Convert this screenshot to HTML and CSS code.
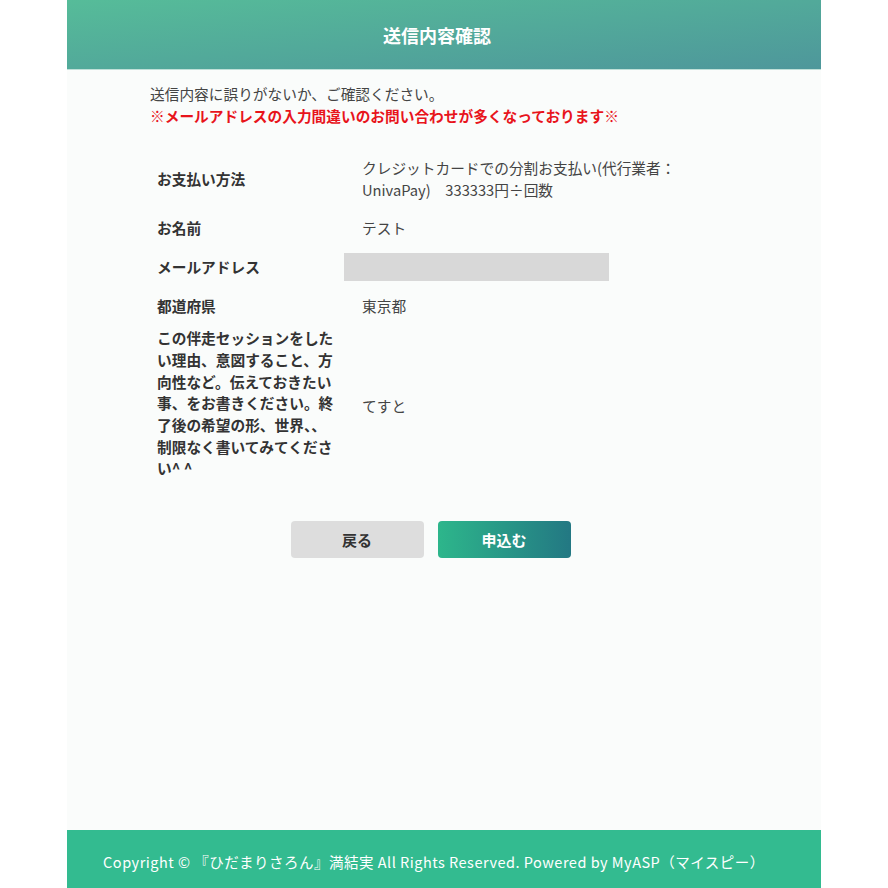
FILE: index.html
```html
<!DOCTYPE html>
<html lang="ja">
<head>
    <meta charset="UTF-8">
    <meta name="viewport" content="width=device-width, initial-scale=1.0">
    <title>送信内容確認</title>
    <link rel="stylesheet" href="styles.css">
</head>
<body>

    <div class="page">
        <!-- Header -->
        <div class="page-header">送信内容確認</div>

        <!-- Main -->
        <div class="page-main">
            <div class="confirm">
                <p class="lead">送信内容に誤りがないか、ご確認ください。</p>
                <p class="notice">※メールアドレスの入力間違いのお問い合わせが多くなっております※</p>

                <table class="confirm-table">
                    <tr>
                        <th>お支払い方法</th>
                        <td>クレジットカードでの分割お支払い(代行業者：UnivaPay)　333333円÷回数</td>
                    </tr>
                    <tr>
                        <th>お名前</th>
                        <td>テスト</td>
                    </tr>
                    <tr>
                        <th>メールアドレス</th>
                        <td class="masked-cell"><div class="masked"></div></td>
                    </tr>
                    <tr>
                        <th>都道府県</th>
                        <td>東京都</td>
                    </tr>
                    <tr class="row-long">
                        <th>この伴走セッションをしたい理由、意図すること、方向性など。伝えておきたい事、をお書きください。終了後の希望の形、世界、、制限なく書いてみてくださ い^ ^</th>
                        <td>てすと</td>
                    </tr>
                </table>

                <div class="actions">
                    <button class="btn btn-back">戻る</button>
                    <button class="btn btn-submit">申込む</button>
                </div>
            </div>
        </div>

        <!-- Footer -->
        <div class="page-footer">Copyright © 『ひだまりさろん』満結実 All Rights Reserved. Powered by MyASP（マイスピー）</div>
    </div>

</body>
</html>
```

FILE: styles.css
```css
body {
    margin: 0;
    font-family: "Noto Sans CJK JP", "Noto Sans", sans-serif;
    background-color: #FFFFFF;
    color: #444444;
}

.page {
    width: 754px;
    margin: 0 auto;
    min-height: 888px;
    display: flex;
    flex-direction: column;
    background-color: #FAFCFB;
}

/* Header */
.page-header {
    height: 69px;
    display: flex;
    justify-content: center;
    align-items: center;
    padding-right: 14px;
    background: linear-gradient(to bottom right, #56BC99, #4E979B);
    border-bottom: 1px solid #BFE0D8;
    color: #FFFFFF;
    font-size: 18px;
    font-weight: bold;
}

/* Main */
.page-main {
    flex-grow: 1;
}

.confirm {
    width: 561px;
    margin-left: 83px;
    padding-top: 13px;
    font-size: 14.7px;
    line-height: 21.7px;
}

.confirm p {
    margin: 0;
}

.notice {
    color: #E8141B;
    font-weight: bold;
}

/* Table */
.confirm-table {
    width: 540px;
    margin-top: 23px;
    border-collapse: collapse;
}

.confirm-table th {
    width: 180px;
    padding: 8px 7px;
    text-align: left;
    vertical-align: middle;
    color: #333333;
    font-weight: bold;
}

.confirm-table td {
    padding: 8px 0 8px 18px;
    vertical-align: middle;
    color: #444444;
}

.confirm-table .masked-cell {
    padding-left: 0;
}

.masked {
    width: 265px;
    height: 28px;
    margin: -2px 0;
    background-color: #D8D8D8;
}

.confirm-table .row-long th {
    padding-top: 3px;
}

/* Buttons */
.actions {
    display: flex;
    justify-content: center;
    gap: 14px;
    margin-top: 34px;
}

.btn {
    width: 133px;
    height: 37px;
    border: none;
    border-radius: 4px;
    font-family: inherit;
    font-size: 15px;
    font-weight: bold;
    cursor: pointer;
}

.btn-back {
    background-color: #DDDDDD;
    color: #333333;
}

.btn-submit {
    background: linear-gradient(to right, #2DB68B, #237883);
    color: #FFFFFF;
}

/* Footer */
.page-footer {
    height: 54px;
    display: flex;
    justify-content: center;
    align-items: center;
    padding: 4px 20px 0 0;
    background-color: #33BB90;
    color: #FFFFFF;
    font-size: 14.5px;
    letter-spacing: 0.5px;
}
```
